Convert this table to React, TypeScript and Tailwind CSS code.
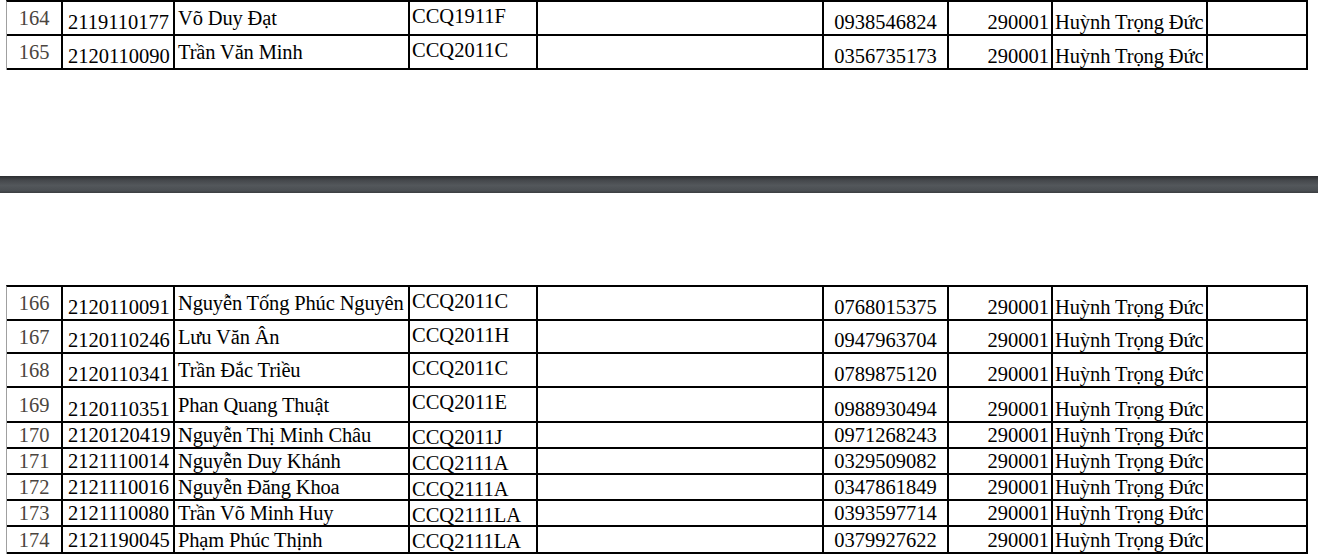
type Row = { h: string; cells: string[] };

const cols = [
  "w-[56px] justify-center items-center text-[#4b4540]",
  "w-[112px] items-end pl-[5px] pb-[1px]",
  "w-[235px] items-center pl-[3px] tracking-[-0.15px]",
  "w-[128px] items-start pl-[2px] pt-[3px]",
  "w-[286px]",
  "w-[125px] justify-center items-end pb-[1px]",
  "w-[104px] justify-end items-end pr-[2px] pb-[1px]",
  "w-[155px] items-end pl-[2px] pb-[1px] tracking-[-0.1px]",
  "w-[100px]",
];

const teacher = "Huỳnh Trọng Đức";

const topRows: Row[] = [
  { h: "h-[34px]", cells: ["164", "2119110177", "Võ Duy Đạt", "CCQ1911F", "", "0938546824", "290001", teacher, ""] },
  { h: "h-[34px]", cells: ["165", "2120110090", "Trần Văn Minh", "CCQ2011C", "", "0356735173", "290001", teacher, ""] },
];

const bottomRows: Row[] = [
  { h: "h-[34px]", cells: ["166", "2120110091", "Nguyễn Tống Phúc Nguyên", "CCQ2011C", "", "0768015375", "290001", teacher, ""] },
  { h: "h-[33px]", cells: ["167", "2120110246", "Lưu Văn Ân", "CCQ2011H", "", "0947963704", "290001", teacher, ""] },
  { h: "h-[34px]", cells: ["168", "2120110341", "Trần Đắc Triều", "CCQ2011C", "", "0789875120", "290001", teacher, ""] },
  { h: "h-[35px]", cells: ["169", "2120110351", "Phan Quang Thuật", "CCQ2011E", "", "0988930494", "290001", teacher, ""] },
  { h: "h-[26px]", cells: ["170", "2120120419", "Nguyễn Thị Minh Châu", "CCQ2011J", "", "0971268243", "290001", teacher, ""] },
  { h: "h-[26px]", cells: ["171", "2121110014", "Nguyễn Duy Khánh", "CCQ2111A", "", "0329509082", "290001", teacher, ""] },
  { h: "h-[26px]", cells: ["172", "2121110016", "Nguyễn Đăng Khoa", "CCQ2111A", "", "0347861849", "290001", teacher, ""] },
  { h: "h-[26px]", cells: ["173", "2121110080", "Trần Võ Minh Huy", "CCQ2111LA", "", "0393597714", "290001", teacher, ""] },
  { h: "h-[27px]", cells: ["174", "2121190045", "Phạm Phúc Thịnh", "CCQ2111LA", "", "0379927622", "290001", teacher, ""] },
];

function Sheet({ rows }: { rows: Row[] }) {
  return (
    <div className="ml-[6px] w-fit border-l border-t-2 border-l-[#a0a0a0] border-t-black">
      {rows.map((r) => (
        <div key={r.cells[0]} className={`flex border-b-2 border-black ${r.h}`}>
          {r.cells.map((c, i) => (
            <div
              key={i}
              className={`flex shrink-0 overflow-visible whitespace-nowrap border-r-2 border-black leading-[22px] ${cols[i]}`}
            >
              {c}
            </div>
          ))}
        </div>
      ))}
    </div>
  );
}

export default function App() {
  return (
    <div className="h-[554px] w-[1318px] overflow-hidden bg-white font-['Liberation_Serif','Times_New_Roman',serif] text-[20.5px] text-black">
      <Sheet rows={topRows} />
      <div className="h-[106px]" />
      <div className="h-[17px] bg-[linear-gradient(to_bottom,#2b2d30_0%,#45484c_25%,#53575b_55%,#4b4f53_85%,#3a3d40_100%)]" />
      <div className="h-[92px]" />
      <Sheet rows={bottomRows} />
    </div>
  );
}
